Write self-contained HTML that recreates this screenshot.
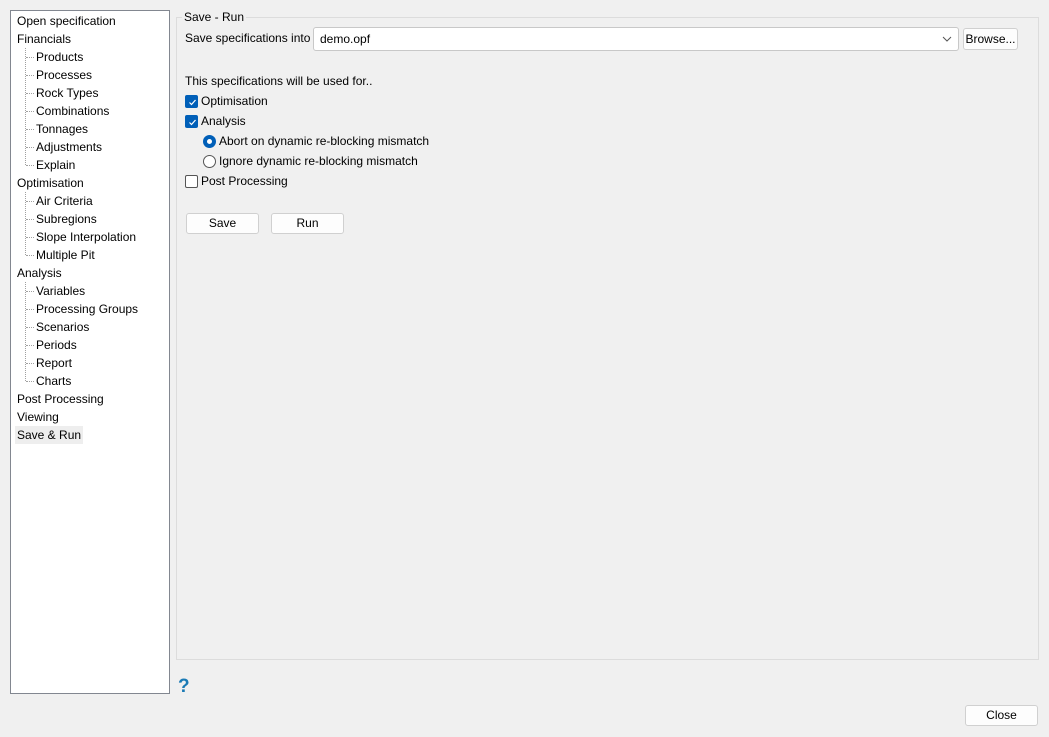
<!DOCTYPE html>
<html><head><style>
body{margin:0;width:1049px;height:737px;background:#f0f0f0;font-family:"Liberation Sans",sans-serif;font-size:12px;color:#000;position:relative;overflow:hidden}
.a{position:absolute;white-space:nowrap;line-height:18px}
#tree{position:absolute;left:10px;top:10px;width:158px;height:682px;background:#fff;border:1px solid #828790}
.t{position:absolute;line-height:18px;white-space:nowrap}
.dl{position:absolute;border-left:1px dotted #a0a0a0}
.dh{position:absolute;border-top:1px dotted #a0a0a0;width:8px}
.btn{position:absolute;background:#fdfdfd;border:1px solid #d0d0d0;border-radius:3px;text-align:center;line-height:18px}
.cb{position:absolute;width:13px;height:13px;box-sizing:border-box;border-radius:2px;background:#005fb8;border:1px solid #005fb8}
.cb svg{position:absolute;left:1px;top:1px}
</style></head><body>
<div id="tree">
<div class="t" style="left:6px;top:1px">Open specification</div>
<div class="t" style="left:6px;top:19px">Financials</div>
<div class="dl" style="left:14px;top:37px;height:117px"></div>
<div class="t" style="left:25px;top:37px">Products</div>
<div class="t" style="left:25px;top:55px">Processes</div>
<div class="t" style="left:25px;top:73px">Rock Types</div>
<div class="t" style="left:25px;top:91px">Combinations</div>
<div class="t" style="left:25px;top:109px">Tonnages</div>
<div class="t" style="left:25px;top:127px">Adjustments</div>
<div class="t" style="left:25px;top:145px">Explain</div>
<div class="t" style="left:6px;top:163px">Optimisation</div>
<div class="dl" style="left:14px;top:181px;height:63px"></div>
<div class="t" style="left:25px;top:181px">Air Criteria</div>
<div class="t" style="left:25px;top:199px">Subregions</div>
<div class="t" style="left:25px;top:217px">Slope Interpolation</div>
<div class="t" style="left:25px;top:235px">Multiple Pit</div>
<div class="t" style="left:6px;top:253px">Analysis</div>
<div class="dl" style="left:14px;top:271px;height:99px"></div>
<div class="t" style="left:25px;top:271px">Variables</div>
<div class="t" style="left:25px;top:289px">Processing Groups</div>
<div class="t" style="left:25px;top:307px">Scenarios</div>
<div class="t" style="left:25px;top:325px">Periods</div>
<div class="t" style="left:25px;top:343px">Report</div>
<div class="t" style="left:25px;top:361px">Charts</div>
<div class="dh" style="left:15px;top:46px"></div><div class="dh" style="left:15px;top:64px"></div><div class="dh" style="left:15px;top:82px"></div><div class="dh" style="left:15px;top:100px"></div><div class="dh" style="left:15px;top:118px"></div><div class="dh" style="left:15px;top:136px"></div><div class="dh" style="left:15px;top:154px"></div>
<div class="dh" style="left:15px;top:190px"></div><div class="dh" style="left:15px;top:208px"></div><div class="dh" style="left:15px;top:226px"></div><div class="dh" style="left:15px;top:244px"></div>
<div class="dh" style="left:15px;top:280px"></div><div class="dh" style="left:15px;top:298px"></div><div class="dh" style="left:15px;top:316px"></div><div class="dh" style="left:15px;top:334px"></div><div class="dh" style="left:15px;top:352px"></div><div class="dh" style="left:15px;top:370px"></div>
<div class="t" style="left:6px;top:379px">Post Processing</div>
<div class="t" style="left:6px;top:397px">Viewing</div>
<div class="t" style="left:4px;top:415px;background:#eee;padding:0 2px">Save &amp; Run</div>
</div>
<div style="position:absolute;left:176px;top:17px;width:861px;height:641px;border:1px solid #dcdcdc"></div>
<div class="a" style="left:182px;top:8px;background:#f0f0f0;padding:0 2px">Save - Run</div>
<div class="a" style="left:185px;top:29px">Save specifications into</div>
<div style="position:absolute;left:313px;top:27px;width:644px;height:22px;background:#fff;border:1px solid #c8c8c8;border-radius:3px"><span class="a" style="left:6px;top:2px">demo.opf</span>
<svg style="position:absolute;right:6px;top:8px" width="10" height="6"><path d="M1 1L5 5L9 1" fill="none" stroke="#555"/></svg></div>
<div class="btn" style="left:963px;top:28px;width:53px;height:20px;line-height:20px">Browse...</div>
<div class="a" style="left:185px;top:72px">This specifications will be used for..</div>
<div class="cb" style="left:185px;top:95px"><svg width="11" height="11"><path d="M2.5 5.5L4.5 7.5L8.5 3" fill="none" stroke="#fff" stroke-width="1.2"/></svg></div>
<div class="a" style="left:201px;top:92px">Optimisation</div>
<div class="cb" style="left:185px;top:115px"><svg width="11" height="11"><path d="M2.5 5.5L4.5 7.5L8.5 3" fill="none" stroke="#fff" stroke-width="1.2"/></svg></div>
<div class="a" style="left:201px;top:112px">Analysis</div>
<div style="position:absolute;left:203px;top:135px;width:13px;height:13px;box-sizing:border-box;border:4px solid #005fb8;border-radius:50%;background:#fff"></div>
<div class="a" style="left:219px;top:132px">Abort on dynamic re-blocking mismatch</div>
<div style="position:absolute;left:203px;top:155px;width:13px;height:13px;box-sizing:border-box;border:1px solid #555;border-radius:50%;background:#fff"></div>
<div class="a" style="left:219px;top:152px">Ignore dynamic re-blocking mismatch</div>
<div style="position:absolute;left:185px;top:175px;width:13px;height:13px;box-sizing:border-box;border:1px solid #555;border-radius:2px;background:#fff"></div>
<div class="a" style="left:201px;top:172px">Post Processing</div>
<div class="btn" style="left:186px;top:213px;width:71px;height:19px">Save</div>
<div class="btn" style="left:271px;top:213px;width:71px;height:19px">Run</div>
<div class="a" style="left:178px;top:676px;font-size:19px;font-weight:bold;color:#1a7ab5;line-height:22px">?</div>
<div class="btn" style="left:965px;top:705px;width:71px;height:19px">Close</div>
</body></html>
